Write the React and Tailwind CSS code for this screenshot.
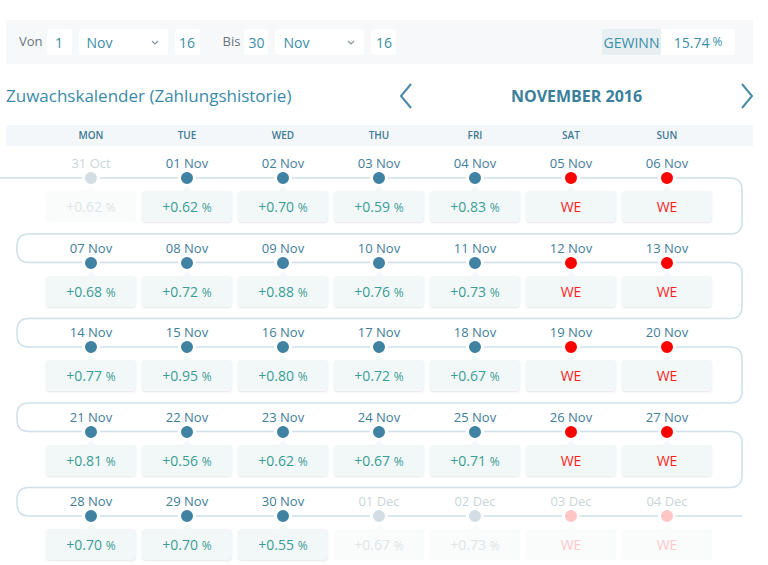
import React from 'react';

const rows = [
  [
    { date: '31 Oct', val: '+0.62', faded: true },
    { date: '01 Nov', val: '+0.62' },
    { date: '02 Nov', val: '+0.70' },
    { date: '03 Nov', val: '+0.59' },
    { date: '04 Nov', val: '+0.83' },
    { date: '05 Nov', we: true },
    { date: '06 Nov', we: true },
  ],
  [
    { date: '07 Nov', val: '+0.68' },
    { date: '08 Nov', val: '+0.72' },
    { date: '09 Nov', val: '+0.88' },
    { date: '10 Nov', val: '+0.76' },
    { date: '11 Nov', val: '+0.73' },
    { date: '12 Nov', we: true },
    { date: '13 Nov', we: true },
  ],
  [
    { date: '14 Nov', val: '+0.77' },
    { date: '15 Nov', val: '+0.95' },
    { date: '16 Nov', val: '+0.80' },
    { date: '17 Nov', val: '+0.72' },
    { date: '18 Nov', val: '+0.67' },
    { date: '19 Nov', we: true },
    { date: '20 Nov', we: true },
  ],
  [
    { date: '21 Nov', val: '+0.81' },
    { date: '22 Nov', val: '+0.56' },
    { date: '23 Nov', val: '+0.62' },
    { date: '24 Nov', val: '+0.67' },
    { date: '25 Nov', val: '+0.71' },
    { date: '26 Nov', we: true },
    { date: '27 Nov', we: true },
  ],
  [
    { date: '28 Nov', val: '+0.70' },
    { date: '29 Nov', val: '+0.70' },
    { date: '30 Nov', val: '+0.55' },
    { date: '01 Dec', val: '+0.67', faded: true },
    { date: '02 Dec', val: '+0.73', faded: true },
    { date: '03 Dec', we: true, faded: true },
    { date: '04 Dec', we: true, faded: true },
  ],
];

const days = ['MON', 'TUE', 'WED', 'THU', 'FRI', 'SAT', 'SUN'];

// serpentine line behind the rows
const buildPath = () => {
  const R = 12;
  const L = 17;
  const Rx = 742;
  let d = `M0 32`;
  for (let k = 0; k < 5; k++) {
    const y = 32 + 84.5 * k;
    const c = 88 + 84.5 * k;
    if (k === 4) {
      d += ` H${Rx}`;
      break;
    }
    d += ` H${Rx - R} Q${Rx} ${y} ${Rx} ${y + R} V${c - R} Q${Rx} ${c} ${Rx - R} ${c} H${L + R} Q${L} ${c} ${L} ${c + R} V${y + 84.5 - R} Q${L} ${y + 84.5} ${L + R} ${y + 84.5}`;
  }
  return d;
};

function Chevron({ dir }) {
  return (
    <svg width="14" height="28" viewBox="0 0 14 28">
      <polyline
        points={dir === 'left' ? '12,2 2,14 12,26' : '2,2 12,14 2,26'}
        fill="none"
        stroke="#4a8aa8"
        strokeWidth="2"
      />
    </svg>
  );
}

function Cell({ cell }) {
  const { date, val, we, faded } = cell;
  const dotColor = we ? (faded ? 'bg-[#ffc6c6]' : 'bg-[#ff0000]') : faded ? 'bg-[#d3dee4]' : 'bg-[#3f82a2]';
  const boxBg = faded ? 'bg-[#fafcfc]' : 'bg-[#f2f7f8]';
  return (
    <div className="flex flex-col items-center">
      <div className={`h-[16px] mt-[9px] text-[13px] leading-[16px] ${faded ? 'text-[#cad5da]' : 'text-[#3f7d99]'}`}>{date}</div>
      <div className="h-[14px] flex items-center justify-center">
        <div className={`w-[18px] h-[18px] rounded-full border-[3px] border-white ${dotColor}`}></div>
      </div>
      <div className={`relative mt-[6px] w-[90px] h-[31px] rounded-[4px] ${boxBg} ${faded ? '' : 'shadow-[0_1px_2px_rgba(0,0,0,0.1)]'} flex items-center justify-center`}>
        <div className={`absolute -top-[3px] left-1/2 -ml-[4px] w-[8px] h-[8px] rotate-45 ${boxBg}`}></div>
        {we ? (
          <span className={`relative text-[14px] ${faded ? 'text-[#ffcaca]' : 'text-[#ff1c1c]'}`}>WE</span>
        ) : (
          <span className={`relative text-[14px] ${faded ? 'text-[#dce6e8]' : 'text-[#3a9d95]'}`}>
            {val} <span className="text-[12px]">%</span>
          </span>
        )}
      </div>
    </div>
  );
}

function Field({ children, w }) {
  return (
    <div className={`${w} h-[26px] bg-white rounded-[3px] flex items-center justify-center text-[14px] text-[#3a8ea8]`}>{children}</div>
  );
}

function MonthSelect() {
  return (
    <div className="w-[89px] h-[26px] bg-white rounded-[3px] flex items-center justify-between pl-[8px] pr-[9px] text-[14px] text-[#3a8ea8]">
      <span>Nov</span>
      <svg width="8" height="5" viewBox="0 0 8 5">
        <polyline points="1,1 4,4 7,1" fill="none" stroke="#8a959b" strokeWidth="1.2" />
      </svg>
    </div>
  );
}

export default function App() {
  return (
    <div className="w-[768px] h-[565px] overflow-hidden bg-white font-['Open_Sans','Liberation_Sans',sans-serif]">
      {/* filter bar */}
      <div className="mt-[20px] ml-[6px] mr-[15px] h-[44px] bg-[#f6f8f9] flex items-center pl-[13px] pr-[18px]">
        <span className="text-[13px] text-[#6b7479] mr-[4px]">Von</span>
        <Field w="w-[25px]">1</Field>
        <div className="w-[7px]"></div>
        <MonthSelect />
        <div className="w-[7px]"></div>
        <Field w="w-[25px]">16</Field>
        <span className="text-[13px] text-[#6b7479] ml-[23px] mr-[4px]">Bis</span>
        <Field w="w-[24px]">30</Field>
        <div className="w-[7px]"></div>
        <MonthSelect />
        <div className="w-[7px]"></div>
        <Field w="w-[25px]">16</Field>
        <div className="flex-1"></div>
        <div className="flex h-[26px] rounded-[3px] overflow-hidden text-[14px] text-[#3a8ea8]">
          <div className="bg-[#e7eff2] w-[59px] flex items-center justify-center">GEWINN</div>
          <div className="bg-white w-[74px] flex items-center justify-center">
            15.74 <span className="text-[12px] ml-[3px]">%</span>
          </div>
        </div>
      </div>

      {/* title row */}
      <div className="mt-[16px] h-[32px] flex items-center">
        <div className="pl-[6px] text-[17px] text-[#3b8aa9] w-[399px]">Zuwachskalender (Zahlungshistorie)</div>
        <Chevron dir="left" />
        <div className="flex-1 text-center text-[16px] font-bold text-[#3a7f9c]">NOVEMBER 2016</div>
        <div className="mr-[14px]">
          <Chevron dir="right" />
        </div>
      </div>

      {/* weekday header */}
      <div className="mt-[13px] ml-[6px] mr-[15px] h-[21px] bg-[#f4f7f9] pl-[37px] grid grid-cols-[repeat(7,96px)] items-center">
        {days.map((d) => (
          <div key={d} className="text-center text-[10px] font-semibold text-[#3d7896]">{d}</div>
        ))}
      </div>

      {/* calendar rows */}
      <div className="relative">
        <svg className="absolute left-0 top-0 pointer-events-none" width="768" height="420">
          <path d={buildPath()} fill="none" stroke="#cfe0ea" strokeWidth="1.5" />
        </svg>
        <div className="relative pl-[43px]">
          {rows.map((row, i) => (
            <div key={i} className="h-[84.5px] grid grid-cols-[repeat(7,96px)]">
              {row.map((cell) => (
                <Cell key={cell.date} cell={cell} />
              ))}
            </div>
          ))}
        </div>
      </div>
    </div>
  );
}
